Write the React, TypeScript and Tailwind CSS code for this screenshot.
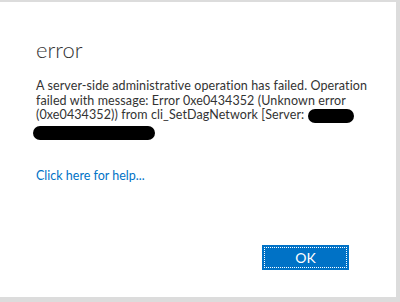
export default function App() {
  return (
    <div className="w-[400px] h-[302px] bg-[#dcdcdc] pt-[2px] pr-[4px] pb-[5px] font-['Lato',sans-serif]">
      <div className="h-full bg-white flex flex-col pl-[36px] pr-[20px]">
        <h1 className="mt-[37px] text-[22px] font-light leading-none text-[#333]">error</h1>
        <div className="mt-[18px] text-[12.5px] leading-[14.6px] text-[#333] tracking-[0.1px]">
          <p className="whitespace-nowrap">
            A server-side administrative operation has failed. Operation
            <br />
            failed with message: Error 0xe0434352 (Unknown error
            <br />
            (0xe0434352)) from cli_SetDagNetwork [Server:{" "}
            <span className="inline-block align-middle w-[46px] h-[14px] rounded-full bg-black" />
          </p>
          <div className="-ml-[3px] mt-[3px] w-[122px] h-[14px] rounded-full bg-black" />
        </div>
        <a href="#" className="mt-[27px] text-[12.5px] text-[#0072c6]">
          Click here for help...
        </a>
        <div className="mt-auto mb-[27px] flex justify-end">
          <button className="w-[87px] h-[25px] bg-[#0072c6] p-[2px] mr-[27px]">
            <span className="flex h-full w-full items-center justify-center border border-dotted border-white text-[14px] text-white">
              OK
            </span>
          </button>
        </div>
      </div>
    </div>
  );
}
